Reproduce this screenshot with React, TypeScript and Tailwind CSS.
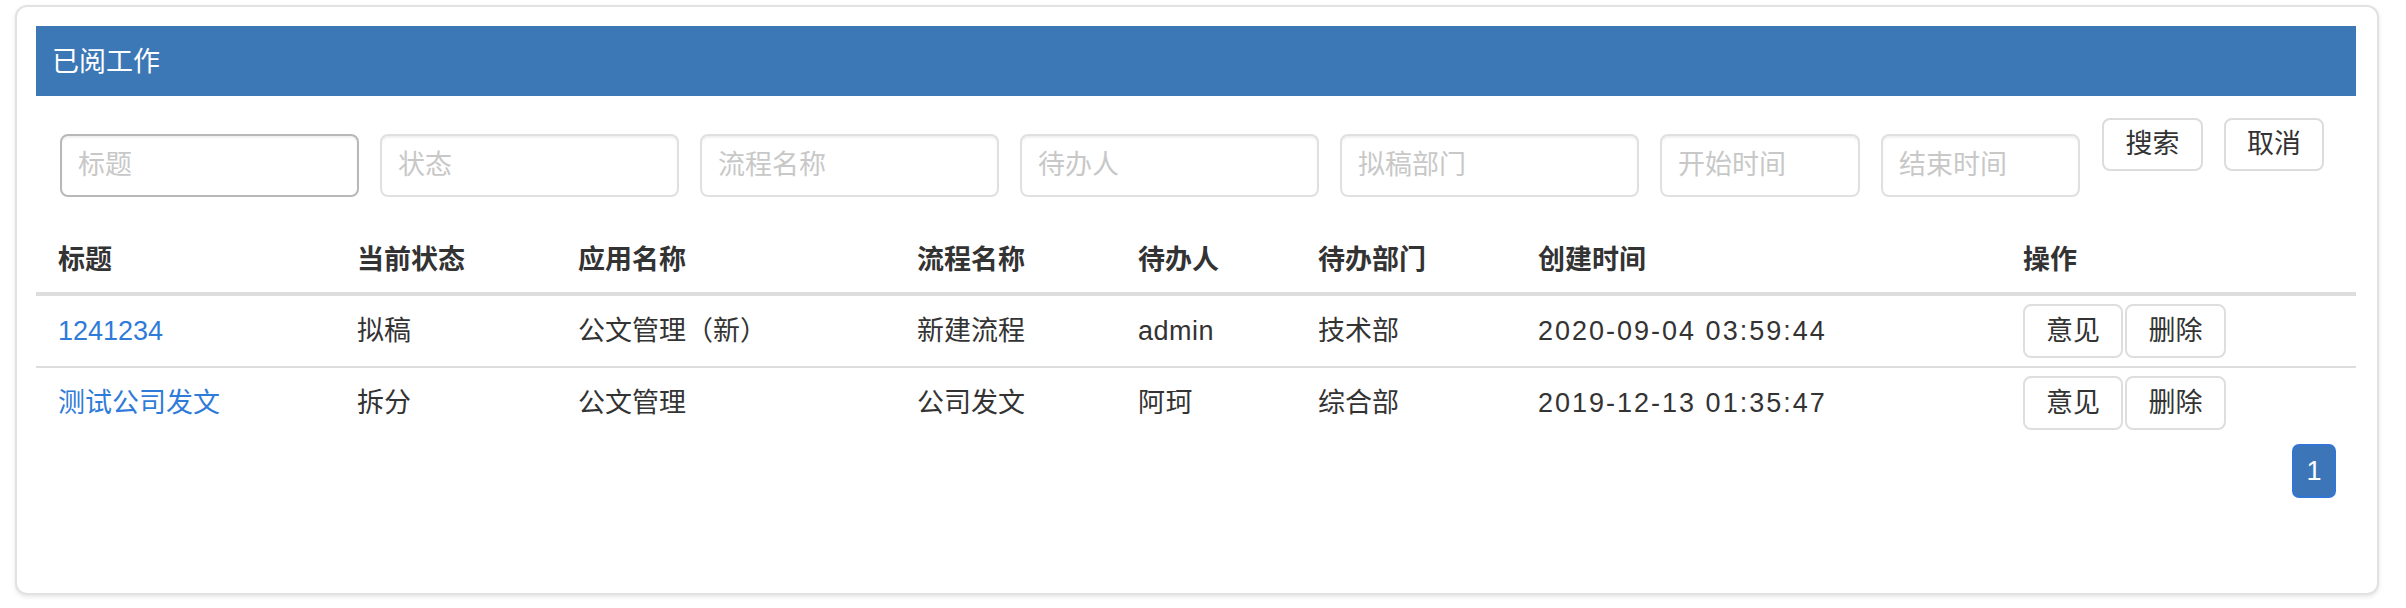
import React from "react";

const cols = "grid grid-cols-[299px_221px_339px_221px_180px_220px_485px_355px]";

const inputs: { label: string; w: string; dark?: boolean }[] = [
  { label: "标题", w: "w-[299px]", dark: true },
  { label: "状态", w: "w-[299px]" },
  { label: "流程名称", w: "w-[299px]" },
  { label: "待办人", w: "w-[299px]" },
  { label: "拟稿部门", w: "w-[299px]" },
  { label: "开始时间", w: "w-[200px]" },
  { label: "结束时间", w: "w-[199px]" },
];

const rows = [
  ["1241234", "拟稿", "公文管理（新）", "新建流程", "admin", "技术部", "2020-09-04 03:59:44"],
  ["测试公司发文", "拆分", "公文管理", "公司发文", "阿珂", "综合部", "2019-12-13 01:35:47"],
];

const heads = ["标题", "当前状态", "应用名称", "流程名称", "待办人", "待办部门", "创建时间", "操作"];

function ActionButtons() {
  return (
    <div className="flex gap-[2px]">
      <button className="w-[100px] h-[54px] rounded-[8px] border-2 border-[#dedede] bg-white text-[#333] text-[27px] leading-none">
        意见
      </button>
      <button className="w-[101px] h-[54px] rounded-[8px] border-2 border-[#dedede] bg-white text-[#333] text-[27px] leading-none">
        删除
      </button>
    </div>
  );
}

export default function App() {
  return (
    <div className="w-[2406px] h-[608px] bg-white pt-[5px] pl-[15px] font-['Liberation_Sans','Noto_Sans_CJK_SC',sans-serif] text-[#333]">
      <div className="w-[2364px] h-[590px] rounded-[12px] border-2 border-[#e2e2e2] bg-white pt-[19px] pl-[19px] pr-[21px] shadow-[0_2px_4px_rgba(0,0,0,0.1)]">
        <div className="h-[70px] bg-[#3c77b6] flex items-center pl-[16px] pt-[2px] text-white text-[27px]">
          已阅工作
        </div>

        <div className="flex items-start pt-[22px] pl-[24px]">
          <div className="flex gap-[21px] mt-[16px]">
            {inputs.map((i) => (
              <input
                key={i.label}
                placeholder={i.label}
                className={`${i.w} h-[63px] rounded-[8px] border-2 ${
                  i.dark ? "border-[#b8b8b8]" : "border-[#e0e0e0]"
                } bg-white pl-[16px] text-[27px] outline-none placeholder:text-[#c8c8c8] shadow-[inset_0_2px_2px_rgba(0,0,0,0.06)]`}
              />
            ))}
          </div>
          <div className="flex gap-[21px] ml-[22px]">
            <button className="w-[101px] h-[53px] rounded-[8px] border-2 border-[#dcdcdc] bg-white text-[27px] text-[#333] leading-none">
              搜索
            </button>
            <button className="w-[100px] h-[53px] rounded-[8px] border-2 border-[#dcdcdc] bg-white text-[27px] text-[#333] leading-none">
              取消
            </button>
          </div>
        </div>

        <div className="mt-[27px] text-[27px]">
          <div className={`${cols} h-[72px] border-b-4 border-[#dddddd] pt-[4px]`}>
            {heads.map((h) => (
              <div key={h} className="flex items-center pl-[22px] font-bold">
                {h}
              </div>
            ))}
          </div>
          {rows.map((r, ri) => (
            <div
              key={ri}
              className={`${cols} ${ri === 0 ? "h-[70px]" : "h-[72px] border-t-2 border-[#dddddd]"}`}
            >
              {r.map((c, ci) => (
                <div
                  key={ci}
                  className={`flex items-center pl-[22px] ${ci === 0 ? "text-[#2f7bd9]" : ""} ${
                    ci === 6 ? "tracking-[2px]" : ""
                  } ${ci === 4 ? "tracking-[0.5px]" : ""}`}
                >
                  {c}
                </div>
              ))}
              <div className="flex items-center pl-[22px]">
                <ActionButtons />
              </div>
            </div>
          ))}
          <div className="flex justify-end pr-[20px] mt-[6px]">
            <div className="w-[44px] h-[54px] rounded-[7px] bg-[#3c76b8] border-2 border-[#3375d2] flex items-center justify-center text-white text-[27px]">
              1
            </div>
          </div>
        </div>
      </div>
    </div>
  );
}
